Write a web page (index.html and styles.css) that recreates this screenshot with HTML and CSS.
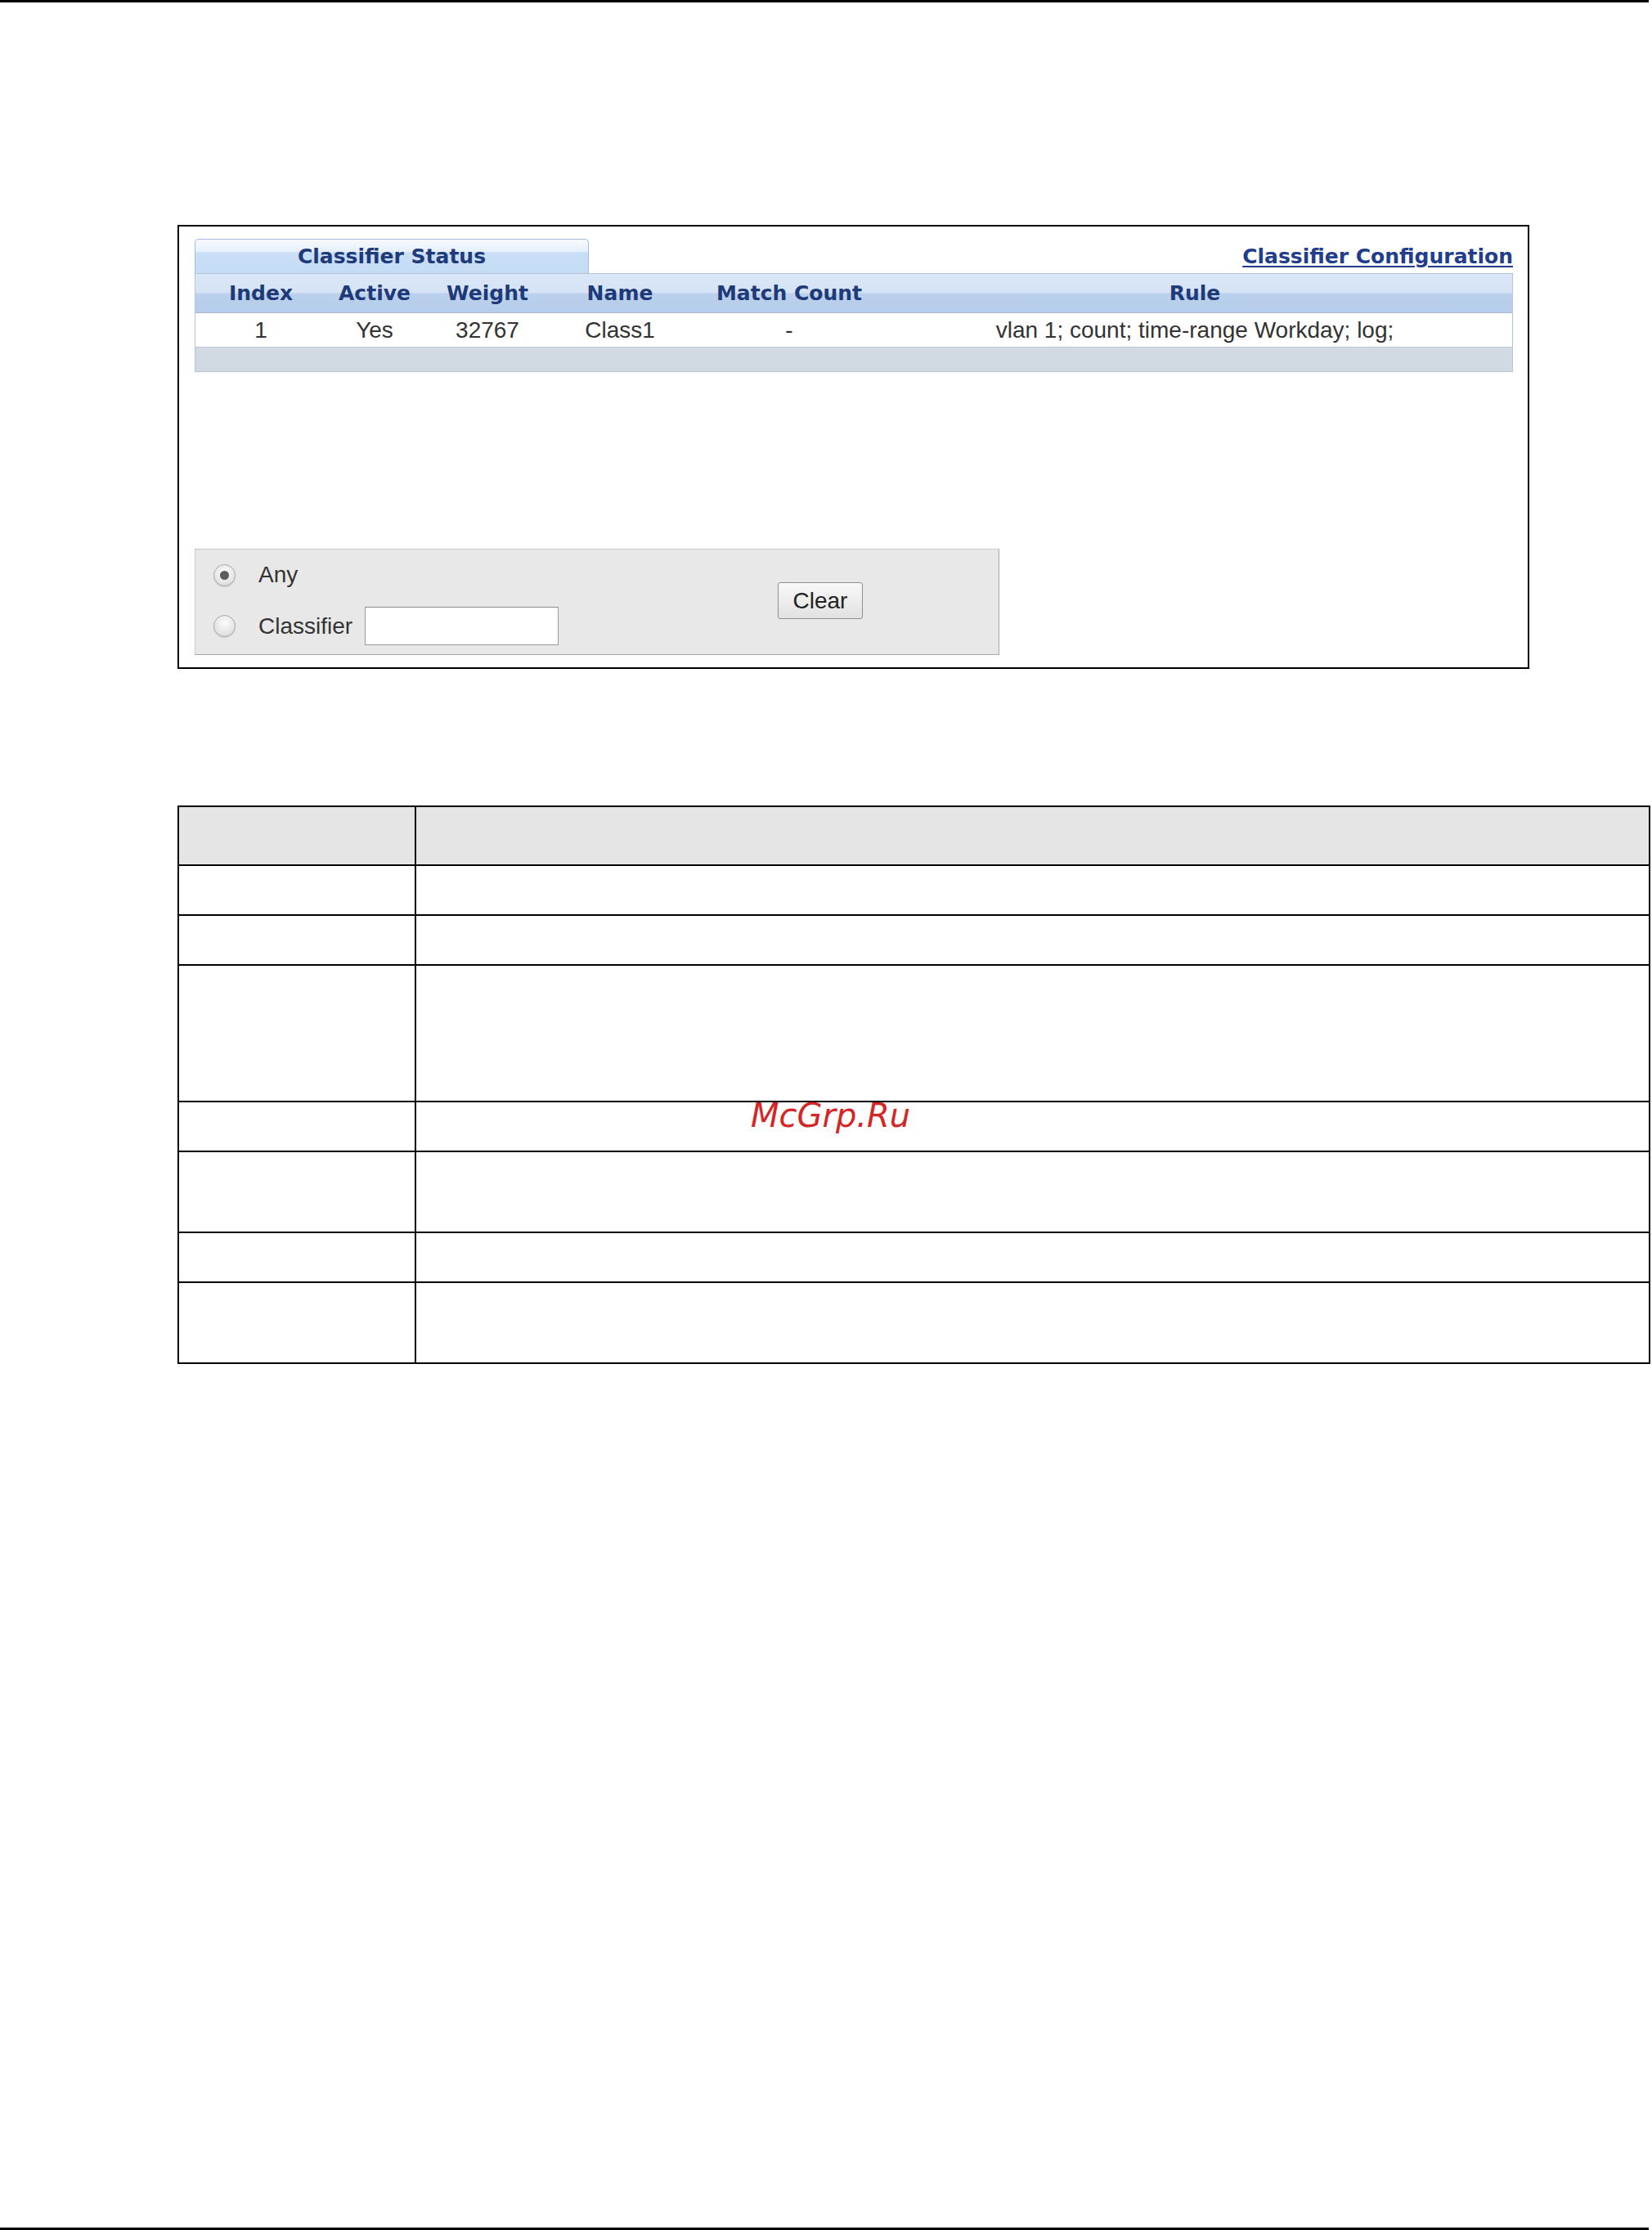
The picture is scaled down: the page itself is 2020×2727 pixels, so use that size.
FILE: index.html
```html
<!DOCTYPE html>
<html lang="en">
<head>
    <meta charset="UTF-8">
    <title>Classifier Status</title>
    <link rel="stylesheet" href="styles.css">
</head>
<body>
    <div class="rule-top"></div>
    <div class="page">
        <div class="shot">
            <div class="tabbar">
                <div class="tab">Classifier Status</div>
                <a class="config-link" href="#">Classifier Configuration</a>
            </div>
            <div class="status">
                <div class="status-head">
                    <div>Index</div>
                    <div>Active</div>
                    <div>Weight</div>
                    <div>Name</div>
                    <div>Match Count</div>
                    <div>Rule</div>
                    <div></div>
                </div>
                <div class="status-row">
                    <div>1</div>
                    <div>Yes</div>
                    <div>32767</div>
                    <div>Class1</div>
                    <div>-</div>
                    <div>vlan 1; count; time-range Workday; log;</div>
                    <div></div>
                </div>
                <div class="status-foot"></div>
            </div>
            <div class="clear-box">
                <div class="choices">
                    <label class="choice">
                        <input type="radio" name="target" checked>
                        <span>Any</span>
                    </label>
                    <label class="choice">
                        <input type="radio" name="target">
                        <span>Classifier</span>
                        <input type="text" class="name-field">
                    </label>
                </div>
                <button class="clear-btn">Clear</button>
            </div>
        </div>

        <div class="desc">
            <div class="desc-row head" style="height: 70px"><div class="label"></div><div class="text"></div></div>
            <div class="desc-row" style="height: 59px"><div class="label"></div><div class="text"></div></div>
            <div class="desc-row" style="height: 59px"><div class="label"></div><div class="text"></div></div>
            <div class="desc-row" style="height: 165px"><div class="label"></div><div class="text"></div></div>
            <div class="desc-row" style="height: 59px"><div class="label"></div><div class="text"></div></div>
            <div class="desc-row" style="height: 97px"><div class="label"></div><div class="text"></div></div>
            <div class="desc-row" style="height: 59px"><div class="label"></div><div class="text"></div></div>
            <div class="desc-row" style="height: 97px"><div class="label"></div><div class="text"></div></div>
        </div>
    </div>
    <div class="rule-bottom"></div>
    <div class="watermark">McGrp.Ru</div>
</body>
</html>
```

FILE: styles.css
```css
body {
    margin: 0;
    background: #fff;
    font-family: "Liberation Sans", Arial, sans-serif;
    position: relative;
    width: 2020px;
    height: 2727px;
    overflow: hidden;
}
.rule-top {
    width: 2016px;
    height: 3px;
    background: #000;
}
.rule-bottom {
    width: 2016px;
    height: 3px;
    background: #000;
    margin-top: 1056px;
}
.page {
    padding-left: 217px;
}

/* screenshot frame */
.shot {
    margin-top: 272px;
    width: 1653px;
    box-sizing: border-box;
    border: 2px solid #000;
    padding: 15px 18px 15px 19px;
}
.tabbar {
    display: flex;
    justify-content: space-between;
    align-items: flex-end;
}
.tab {
    width: 482px;
    height: 42px;
    box-sizing: border-box;
    border: 1px solid #a3bcdf;
    border-bottom: none;
    border-radius: 5px 5px 0 0;
    background: linear-gradient(#f7fafd 0%, #e6f0fb 35%, #c9dff6 40%, #c6dcf5 100%);
    font-family: "DejaVu Sans", Verdana, sans-serif;
    font-weight: bold;
    font-size: 25px;
    color: #1e3a78;
    text-align: center;
    line-height: 42px;
}
.config-link {
    font-family: "DejaVu Sans", Verdana, sans-serif;
    font-weight: bold;
    font-size: 25px;
    color: #223d8c;
    text-decoration: underline;
    text-underline-offset: 3px;
    margin-bottom: 6px;
}

.status {
    border: 1px solid #b4c4da;
}
.status-head,
.status-row {
    display: grid;
    grid-template-columns: 160px 118px 158px 166px 248px 744px 1fr;
    text-align: center;
}
.status-head {
    height: 47px;
    background: linear-gradient(#dae7f7 0%, #d5e3f5 48%, #bad0ed 52%, #b6cdeb 100%);
    border-bottom: 1px solid #a9bcd7;
    font-family: "DejaVu Sans", Verdana, sans-serif;
    font-weight: bold;
    font-size: 25px;
    color: #1e3a78;
    line-height: 47px;
}
.status-row {
    height: 41px;
    background: #fff;
    border-bottom: 1px solid #bcc7d4;
    font-size: 28px;
    color: #333;
    line-height: 41px;
}
.status-foot {
    height: 29px;
    background: #d1d9e3;
}

/* clear counters form */
.clear-box {
    margin-top: 216px;
    width: 984px;
    height: 130px;
    box-sizing: border-box;
    background: #e8e8e8;
    border: 1px solid #c8c8c8;
    border-right-color: #a8a8a8;
    border-bottom-color: #a8a8a8;
    display: flex;
    align-items: center;
}
.choices {
    width: 712px;
    display: flex;
    flex-direction: column;
    gap: 16px;
    padding-bottom: 3px;
}
.choice {
    display: flex;
    align-items: center;
    height: 47px;
    font-size: 28px;
    color: #333;
}
.choice:first-child {
    height: 46px;
}
.choice input[type="radio"] {
    appearance: none;
    -webkit-appearance: none;
    width: 27px;
    height: 27px;
    margin: 0 28px 0 22px;
    border: 1px solid #a6a6a6;
    border-radius: 50%;
    background: radial-gradient(circle at 50% 35%, #fbfbfb 0%, #e6e6e6 60%, #cfcfcf 100%);
    box-shadow: 0 1px 1px rgba(0, 0, 0, 0.12);
    box-sizing: border-box;
    position: relative;
}
.choice input[type="radio"]:checked::after {
    content: "";
    position: absolute;
    left: 7px;
    top: 7px;
    width: 11px;
    height: 11px;
    border-radius: 50%;
    background: #5c5c5c;
}
.name-field {
    margin-left: 15px;
    width: 237px;
    height: 47px;
    box-sizing: border-box;
    border: 1px solid #9a9a9a;
    border-top-color: #8a8a8a;
    background: #fff;
}
.clear-btn {
    width: 104px;
    height: 45px;
    font-family: "Liberation Sans", Arial, sans-serif;
    font-size: 28px;
    color: #222;
    border: 1px solid #8f8f8f;
    border-radius: 3px;
    background: linear-gradient(#f8f8f8, #e2e2e2);
    padding: 0;
    margin-top: -3px;
}

/* description table */
.desc {
    margin-top: 167px;
    width: 1801px;
    border: 2px solid #000;
    box-sizing: border-box;
}
.desc-row {
    display: flex;
    border-top: 2px solid #000;
}
.desc-row:first-child {
    border-top: none;
}
.desc-row.head {
    background: #e5e5e5;
}
.desc-row .label {
    width: 288px;
    border-right: 2px solid #000;
}
.desc-row .text {
    flex: 1;
}

.watermark {
    position: absolute;
    left: 918px;
    top: 1344px;
    font-family: "DejaVu Sans", sans-serif;
    font-style: italic;
    font-size: 40px;
    line-height: 1;
    color: #d42626;
}
```
